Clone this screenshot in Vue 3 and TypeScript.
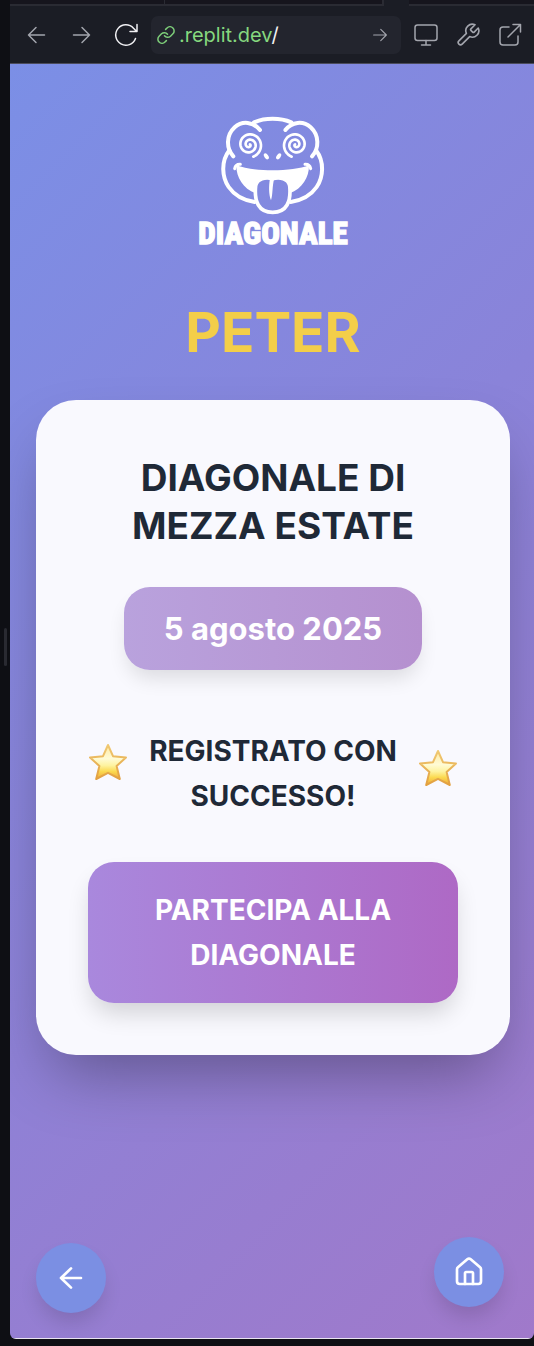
<script setup lang="ts">
import { ref } from 'vue'

const address = ref('.replit.dev/')
const editing = ref(false)

const participant = 'PETER'
const eventTitle = 'DIAGONALE DI MEZZA ESTATE'
const eventDate = '5 agosto 2025'

// Archimedean spiral used for the hypnotised eyes of the mascot.
function spiral(cx: number, cy: number, dir: 1 | -1): string {
  const points: string[] = []
  const end = Math.PI * 4.5
  for (let i = 0; i <= 100; i++) {
    const t = (end * i) / 100
    const r = 2 + (36 * t) / end
    const a = end - t - 1.25
    points.push(`${(cx + dir * r * Math.cos(a)).toFixed(1)} ${(cy - r * Math.sin(a)).toFixed(1)}`)
  }
  return 'M' + points.join('L')
}
const leftEye = spiral(178, 119, 1)
const rightEye = spiral(317, 119, -1)
</script>

<template>
  <div class="workspace">
    <div class="rail"><span class="grip"></span></div>
    <div class="preview">
      <div class="tabs"><span class="tab first"></span><span class="tab second"></span><span class="tab-gap"></span><span class="tab rest"></span></div>
      <header class="toolbar">
        <button class="tool" aria-label="Back">
          <svg width="24" height="24" viewBox="0 0 24 24"><path d="M20.500 12H4.500M12 4.500L4.500 12l7.500 7.500" /></svg>
        </button>
        <button class="tool" aria-label="Forward">
          <svg width="24" height="24" viewBox="0 0 24 24"><path d="M3.500 12h16M12 4.500l7.500 7.500-7.500 7.500" /></svg>
        </button>
        <button class="tool bright" aria-label="Reload">
          <svg width="26" height="26" viewBox="0 0 26 26"><path d="M22.500 16.500A10.200 10.200 0 1 1 20.500 6.200L23.500 9.200M24 2.500v7h-7" /></svg>
        </button>
        <form class="address" @submit.prevent>
          <svg class="chain" width="18" height="18" viewBox="0 0 24 24"><path d="M10 13a5.500 5.500 0 0 0 8 .6l3.200-3.200a5.500 5.500 0 0 0-7.800-7.800L11.500 4.500M14 11a5.500 5.500 0 0 0-8-.6l-3.200 3.200a5.500 5.500 0 0 0 7.800 7.800l1.900-1.900" /></svg>
          <label class="url">
            <span v-if="!editing" class="url-text"><span class="host">.replit.dev</span>/</span>
            <input v-model="address" :class="{ idle: !editing }" aria-label="Address" @focus="editing = true" @blur="editing = false" />
          </label>
          <button class="tool go" aria-label="Go">
            <svg width="18" height="18" viewBox="0 0 24 24"><path d="M3.500 12h17M13 4.500l7.500 7.500-7.500 7.500" /></svg>
          </button>
        </form>
        <button class="tool" aria-label="Device">
          <svg width="26" height="26" viewBox="0 0 26 26"><rect x="2" y="3" width="22" height="15.500" rx="2.500" /><path d="M13 18.500v4.500M8.500 23h9" /></svg>
        </button>
        <button class="tool" aria-label="Developer tools">
          <svg width="26" height="26" viewBox="0 0 24 24"><path d="M14.700 6.300a1 1 0 0 0 0 1.400l1.600 1.600a1 1 0 0 0 1.400 0l3.770-3.770a6 6 0 0 1-7.940 7.940l-6.910 6.910a2.120 2.120 0 0 1-3-3l6.910-6.910a6 6 0 0 1 7.940-7.940z" /></svg>
        </button>
        <button class="tool" aria-label="Open in new tab">
          <svg width="26" height="26" viewBox="0 0 26 26"><path d="M12 5H6a3 3 0 0 0-3 3v12a3 3 0 0 0 3 3h12a3 3 0 0 0 3-3v-6M16 2.500h7.500V10M23.500 2.500L11 15" /></svg>
        </button>
      </header>

      <main class="page">
        <svg class="logo" width="166" height="150" viewBox="0 0 498 450" role="img" aria-label="Diagonale">
          <g fill="none" stroke="#fff" stroke-width="12" stroke-linecap="round">
            <path d="M192 52C225 38 271 38 304 52" />
            <path d="M210 75C190 50 157 46 134 67C108 91 108 130 130 154" />
            <path d="M286 75C306 50 339 46 362 67C388 91 388 130 366 154" />
            <path d="M118 136C92 170 96 216 116 246C134 272 160 286 194 291" />
            <path d="M378 136C404 170 400 216 380 246C362 272 336 286 302 291" />
            <path d="M134 191Q137 177 151 178M362 191Q359 177 345 178" stroke-width="9" />
            <path :d="leftEye" stroke-width="8" />
            <path :d="rightEye" stroke-width="8" />
            <path d="M197 242C202 220 226 216 248 221C270 216 294 220 299 242C304 290 290 322 248 322C206 322 192 290 197 242Z" stroke-width="11" />
          </g>
          <g fill="#fff">
            <path d="M139 181C190 201 306 201 357 181C358 214 338 252 299 265C302 222 275 213 248 221C221 213 194 222 197 265C158 252 138 214 139 181Z" />
            <path d="M240 220C236 245 236 268 243 286C249 270 246 244 253 220Z" />
            <ellipse cx="229" cy="154" rx="6" ry="10" transform="rotate(-35 229 154)" />
            <ellipse cx="266" cy="154" rx="6" ry="10" transform="rotate(35 266 154)" />
            <text class="wordmark" x="249" y="416" text-anchor="middle">DIAGONALE</text>
          </g>
        </svg>

        <h1 class="name">{{ participant }}</h1>

        <section class="card">
          <h2 class="title">{{ eventTitle }}</h2>
          <p class="date">{{ eventDate }}</p>
          <div class="status">
            <svg class="star high" width="40" height="40" viewBox="0 0 40 40" aria-hidden="true">
              <defs>
                <linearGradient id="starFill" x1="0" y1="0" x2="0" y2="1"><stop offset="0" stop-color="#ffe9a0" /><stop offset=".4" stop-color="#fffbd5" /><stop offset=".6" stop-color="#fef3a0" /><stop offset=".78" stop-color="#fbd94f" /><stop offset="1" stop-color="#efa83a" /></linearGradient>
                <linearGradient id="starEdge" x1="0" y1="0" x2="0" y2="1"><stop offset="0" stop-color="#f0c973" /><stop offset="1" stop-color="#e2a040" /></linearGradient>
              </defs>
              <path d="M20 3L25 14.200L38 15.400L28.600 24L31.800 37L20 30.800L8.200 37L11.400 24L2 15.400L15 14.200Z" fill="url(#starFill)" stroke="url(#starEdge)" stroke-width="2" stroke-linejoin="round" />
            </svg>
            <p class="message">REGISTRATO CON SUCCESSO!</p>
            <svg class="star" width="40" height="40" viewBox="0 0 40 40" aria-hidden="true">
              <path d="M20 3L25 14.200L38 15.400L28.600 24L31.800 37L20 30.800L8.200 37L11.400 24L2 15.400L15 14.200Z" fill="url(#starFill)" stroke="url(#starEdge)" stroke-width="2" stroke-linejoin="round" />
            </svg>
          </div>
          <button class="join">PARTECIPA ALLA DIAGONALE</button>
        </section>

        <nav class="nav">
          <button class="round" aria-label="Indietro">
            <svg width="32" height="32" viewBox="0 0 24 24"><path d="M19.500 12H4.500M12 19.200L4.500 12 12 4.800" /></svg>
          </button>
          <button class="round raised" aria-label="Home">
            <svg width="32" height="32" viewBox="0 0 24 24"><path d="M15 21v-8a1 1 0 0 0-1-1h-4a1 1 0 0 0-1 1v8" /><path d="M3 10a2 2 0 0 1 .709-1.528l7-6a2 2 0 0 1 2.582 0l7 6A2 2 0 0 1 21 10v9a2 2 0 0 1-2 2H5a2 2 0 0 1-2-2z" /></svg>
          </button>
        </nav>
      </main>
    </div>
  </div>
</template>

<style>
body {
  background: #0e0f14;
}
</style>

<style scoped>
.workspace {
  display: flex;
  min-height: 100vh;
  box-sizing: border-box;
  padding-bottom: 7px;
  background: #0e0f14;
  font-family: Inter, "Liberation Sans", sans-serif;
}
h1, h2, p {
  margin: 0;
}
button {
  border: 0;
  padding: 0;
  font-family: inherit;
  cursor: pointer;
}
svg {
  display: block;
  flex: none;
}
.rail {
  flex: none;
  display: flex;
  align-items: center;
  justify-content: flex-end;
  width: 10px;
}
.grip {
  width: 3px;
  height: 38px;
  margin: 0 3px 46px 0;
  border-radius: 2px;
  background: #292a31;
}
.preview {
  flex: 1;
  min-width: 0;
  display: flex;
  flex-direction: column;
  background: #1b1d25;
  border-radius: 0 0 6px 6px;
  overflow: hidden;
}
.tabs {
  display: flex;
  height: 6px;
}
.tab {
  box-sizing: border-box;
  background: #16151d;
  border-bottom: 2px solid #2a2b33;
}
.first {
  flex: 155;
  border-right: 1px solid #2a2b33;
}
.second {
  flex: 218;
  border-right: 2px solid #2a2b33;
}
.tab-gap {
  flex: 25;
}
.rest {
  flex: 126;
}
.toolbar {
  display: flex;
  align-items: center;
  height: 58px;
  box-sizing: border-box;
  padding: 0 11px 0 14px;
  gap: 12px;
  border-bottom: 1px solid #4b4c5c;
}
.tool {
  display: flex;
  align-items: center;
  justify-content: center;
  background: none;
}
.tool:nth-of-type(2) {
  margin: 0 7px 0 10px;
}
.tool svg, .chain {
  fill: none;
  stroke: #a3a5ad;
  stroke-width: 1.5px;
  stroke-linecap: round;
  stroke-linejoin: round;
}
.bright svg {
  stroke: #f0f0f3;
}
.toolbar > .tool:nth-last-child(-n+2) {
  margin-left: 4px;
}
.address {
  flex: 1;
  min-width: 0;
  display: flex;
  align-items: center;
  gap: 4px;
  height: 38px;
  padding: 0 12px 0 6px;
  border-radius: 7px;
  background: #23252e;
}
.chain {
  stroke: #7ecf7a;
  stroke-width: 2px;
}
.url {
  flex: 1;
  min-width: 0;
  display: grid;
  align-items: center;
  font-size: 20px;
  line-height: 28px;
  color: #f2f2f4;
}
.url-text, .url input {
  grid-area: 1 / 1;
}
.url input {
  min-width: 0;
  width: 100%;
  padding: 0;
  border: 0;
  outline: 0;
  background: none;
  font: inherit;
  color: inherit;
}
.url .idle {
  opacity: 0;
}
.host {
  color: #86d97f;
}
.page {
  flex: 1;
  display: flex;
  flex-direction: column;
  align-items: center;
  padding: 41px 24px 25px 26px;
  border-bottom: 1px solid #e9e4f0;
  background: linear-gradient(135deg, #7b8fe6 0%, #8a83d9 45%, #a079ca 100%);
}
.wordmark {
  font-family: "Roboto Condensed", "Liberation Sans Narrow", "Liberation Sans", sans-serif;
  font-size: 93px;
  font-weight: 800;
  stroke: #fff;
  stroke-width: 4px;
}
.name {
  margin-top: 43px;
  font-size: 55px;
  line-height: 68px;
  font-weight: 700;
  color: #f3ce49;
}
.card {
  align-self: stretch;
  display: flex;
  flex-direction: column;
  align-items: center;
  margin-top: 34px;
  padding: 52px;
  border-radius: 40px;
  background: #f9f9fe;
  box-shadow: 0 32px 64px -16px rgba(0, 0, 0, 0.34);
  text-align: center;
  color: #1f2937;
}
.title {
  max-width: 320px;
  padding-top: 2px;
  font-size: 37px;
  line-height: 48px;
  font-weight: 700;
}
.date {
  margin-top: 37px;
  padding: 20px 40px;
  border-radius: 26px;
  background: linear-gradient(90deg, #b9a2dd, #b590cf);
  box-shadow: 0 12px 20px -4px rgba(0, 0, 0, 0.12);
  font-size: 31px;
  line-height: 43px;
  font-weight: 700;
  color: #fff;
}
.status {
  align-self: stretch;
  display: flex;
  align-items: center;
  justify-content: space-between;
  margin-top: 59px;
}
.message {
  flex: 1;
  max-width: 270px;
  font-size: 28px;
  line-height: 45px;
  font-weight: 650;
}
.star {
  padding-bottom: 12px;
}
.high {
  padding-bottom: 24px;
}
.join {
  align-self: stretch;
  margin-top: 43px;
  padding: 26px 50px 25px;
  border-radius: 26px;
  background: linear-gradient(90deg, #a988dd, #ae69c5);
  box-shadow: 0 14px 24px -4px rgba(0, 0, 0, 0.16);
  font-size: 28px;
  line-height: 45px;
  font-weight: 650;
  color: #fff;
}
.nav {
  align-self: stretch;
  display: flex;
  justify-content: space-between;
  align-items: flex-end;
  margin-top: auto;
  padding-right: 6px;
}
.round {
  display: flex;
  align-items: center;
  justify-content: center;
  width: 70px;
  height: 70px;
  border-radius: 50%;
  background: #7b8fe3;
  box-shadow: 0 12px 20px -3px rgba(0, 0, 0, 0.14);
}
.raised {
  margin-bottom: 6px;
}
.round svg {
  fill: none;
  stroke: #fff;
  stroke-width: 2px;
  stroke-linecap: round;
  stroke-linejoin: round;
}
</style>
